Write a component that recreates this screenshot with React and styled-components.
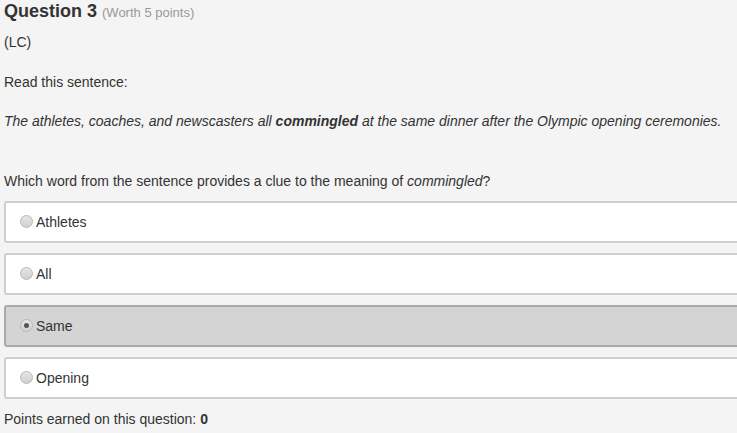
import React from 'react'
import styled, { createGlobalStyle } from 'styled-components'

const GlobalStyle = createGlobalStyle`
  html, body {
    margin: 0;
    padding: 0;
    background: #f4f4f4;
    overflow: hidden;
  }
  body {
    font-family: "Liberation Sans", Arial, sans-serif;
    color: #333;
    font-size: 14px;
  }
`;

const Page = styled.div`
  padding: 0 0 0 4px;
  width: 790px;
`;

const Title = styled.h2`
  margin: 0;
  font-size: 18px;
  line-height: 22px;
  font-weight: bold;
  color: #333;
`;

const Worth = styled.span`
  font-size: 13px;
  font-weight: normal;
  color: #999;
`;

const Para = styled.p`
  margin: ${(p) => p.$top || 0}px 0 0;
  line-height: 20px;
  font-style: ${(p) => (p.$italic ? 'italic' : 'normal')};
`;

const Options = styled.div`
  display: flex;
  flex-direction: column;
  gap: 10px;
  margin-top: 10px;
`;

const Option = styled.label`
  display: flex;
  align-items: center;
  height: 38px;
  padding-left: 14px;
  border: 2px solid ${(p) => (p.$selected ? '#a9a9a9' : '#cfcfcf')};
  border-radius: 3px;
  background: ${(p) => (p.$selected ? '#d4d4d4' : '#fff')};
  cursor: pointer;
`;

const Radio = styled.span`
  width: 11px;
  height: 11px;
  border-radius: 50%;
  border: 1px solid #b8b8b8;
  background: linear-gradient(#e6e6e6, #d0d0d0);
  display: flex;
  align-items: center;
  justify-content: center;
  margin-right: 3px;
  margin-top: -2px;
  &::after {
    content: '';
    display: ${(p) => (p.$checked ? 'block' : 'none')};
    width: 5px;
    height: 5px;
    border-radius: 50%;
    background: #555;
  }
`;

const Score = styled.p`
  margin: 10px 0 0;
  line-height: 20px;
`;

const answers = ['Athletes', 'All', 'Same', 'Opening']

export default function App() {
  return (
    <Page>
      <GlobalStyle />
      <Title>
        Question 3 <Worth>(Worth 5 points)</Worth>
      </Title>
      <Para $top={8}>(LC)</Para>
      <Para $top={20}>Read this sentence:</Para>
      <Para $top={19} $italic>
        The athletes, coaches, and newscasters all <b>commingled</b> at the same dinner after the Olympic opening ceremonies.
      </Para>
      <Para $top={40}>Which word from the sentence provides a clue to the meaning of <i>commingled</i>?</Para>
      <Options>
        {answers.map((a) => (
          <Option key={a} $selected={a === 'Same'}>
            <Radio $checked={a === 'Same'} />
            {a}
          </Option>
        ))}
      </Options>
      <Score>
        Points earned on this question: <b>0</b>
      </Score>
    </Page>
  )
}
